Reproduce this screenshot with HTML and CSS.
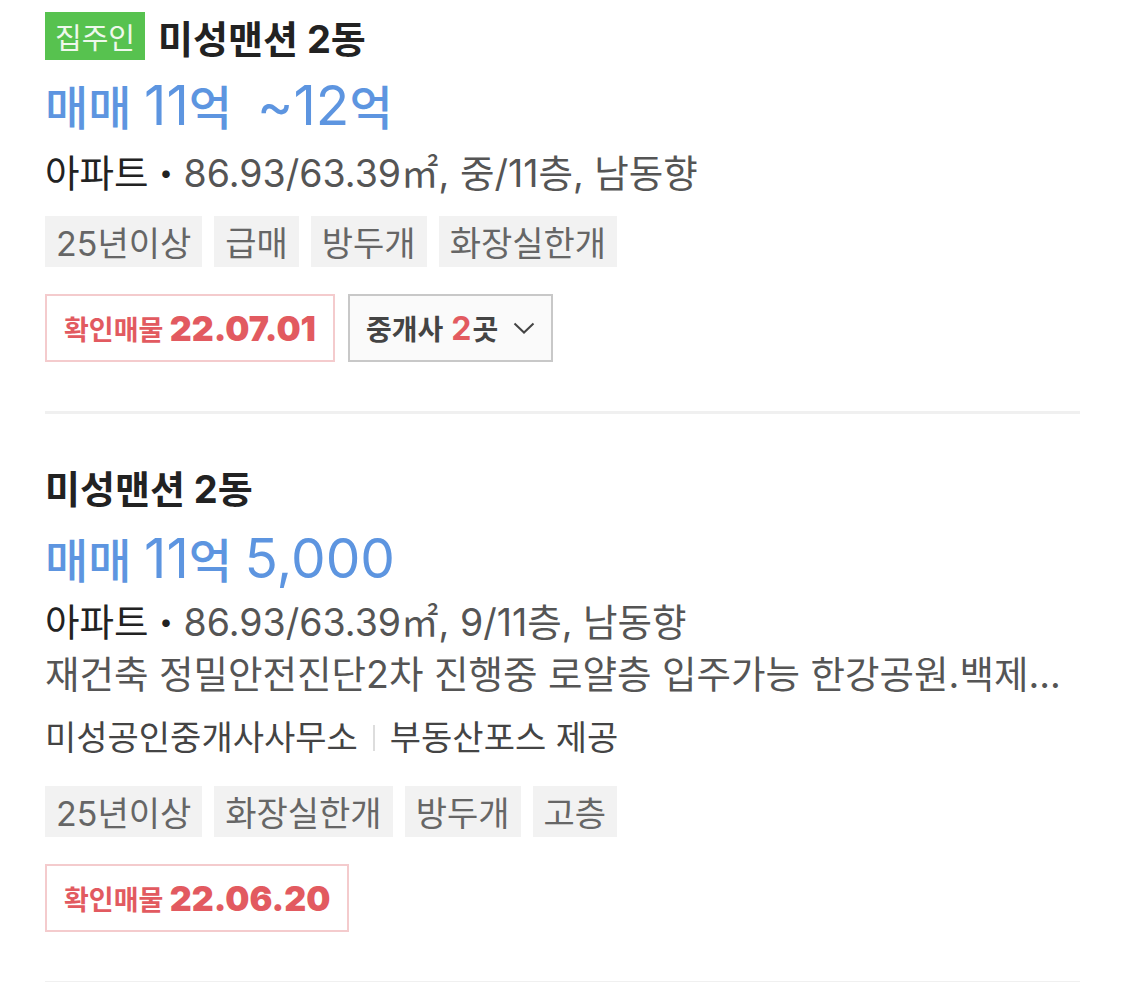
FILE: index.html
```html
<!DOCTYPE html>
<html lang="ko">
<head>
    <meta charset="UTF-8">
    <meta name="viewport" content="width=device-width, initial-scale=1.0">
    <title>매물 목록</title>
    <link rel="stylesheet" href="styles.css">
</head>
<body>
    <main class="list">
        <div class="item">
            <div class="item-title">
                <span class="owner-badge">집주인</span>
                <span class="title-text">미성맨션 2동</span>
            </div>
            <div class="price">매매 <span class="num">11</span>억 &nbsp;<span class="num">~12</span>억</div>
            <p class="spec"><span class="spec-type">아파트 <b>·</b></span> 86.93/63.39㎡, 중/11층, 남동향</p>
            <div class="tags">
                <span class="tag">25년이상</span>
                <span class="tag">급매</span>
                <span class="tag">방두개</span>
                <span class="tag">화장실한개</span>
            </div>
            <div class="actions">
                <span class="confirmed">확인매물 <strong>22.07.01</strong></span>
                <button class="brokers">
                    <span>중개사</span>
                    <em>2</em>
                    <span>곳</span>
                    <svg class="chevron" width="22" height="12" viewBox="0 0 22 12"><path d="M1.5 1.5 L11 10.5 L20.5 1.5" fill="none" stroke="#444" stroke-width="2"/></svg>
                </button>
            </div>
        </div>

        <div class="item">
            <div class="item-title">
                <span class="title-text">미성맨션 2동</span>
            </div>
            <div class="price">매매 <span class="num">11</span>억 <span class="num">5,000</span></div>
            <p class="spec"><span class="spec-type">아파트 <b>·</b></span> 86.93/63.39㎡, 9/11층, 남동향</p>
            <p class="desc">재건축 정밀안전진단2차 진행중 로얄층 입주가능 한강공원.백제...</p>
            <p class="agent">미성공인중개사사무소<span class="sep"></span>부동산포스 제공</p>
            <div class="tags">
                <span class="tag">25년이상</span>
                <span class="tag">화장실한개</span>
                <span class="tag">방두개</span>
                <span class="tag">고층</span>
            </div>
            <div class="actions">
                <span class="confirmed">확인매물 <strong>22.06.20</strong></span>
            </div>
        </div>
    </main>
</body>
</html>
```

FILE: styles.css
```css
body {
    margin: 0;
    background: #fff;
    font-family: Inter, "Noto Sans CJK KR", sans-serif;
    color: #222;
}

.list {
    padding: 0 45px;
}

.item {
    border-bottom: 3px solid #f0f0f0;
    padding: 50px 0 49px;
}

.item:first-child {
    padding-top: 12px;
    padding-bottom: 49px;
}

.item-title {
    display: flex;
    align-items: center;
    gap: 13px;
    height: 48px;
}

.item + .item .item-title {
    height: 44px;
}

.owner-badge {
    display: flex;
    align-items: center;
    height: 48px;
    padding: 0 10px;
    background: #57c24f;
    color: #eef8ec;
    font-size: 29px;
}

.title-text {
    font-size: 38px;
    font-weight: 700;
    color: #222;
}

.price {
    height: 56px;
    margin-top: 17px;
    font-size: 47px;
    line-height: 56px;
    font-weight: 500;
    color: #5d95e0;
}

.price .num {
    font-size: 55px;
    font-weight: 400;
}

.item + .item .price {
    margin-top: 22px;
}

.spec {
    margin: 21px 0 0;
    font-size: 37.5px;
    line-height: 40px;
    color: #555;
}

.item + .item .spec {
    margin-top: 17px;
}

.spec-type {
    color: #222;
}

.spec-type b {
    font-weight: 900;
}

.desc {
    margin: 12px 0 0;
    font-size: 37.5px;
    line-height: 40px;
    color: #555;
    white-space: nowrap;
}

.agent {
    margin: 23px 0 0;
    font-size: 34px;
    line-height: 40px;
    color: #444;
    display: flex;
    align-items: center;
}

.agent .sep {
    width: 2px;
    height: 26px;
    background: #ddd;
    margin: 0 15px;
}

.tags {
    display: flex;
    gap: 12px;
    margin-top: 22px;
}

.item + .item .tags {
    margin-top: 28px;
}

.tag {
    display: flex;
    align-items: center;
    height: 51px;
    padding: 0 11px;
    background: #f2f2f2;
    color: #666;
    font-size: 34px;
}

.actions {
    display: flex;
    gap: 13px;
    margin-top: 27px;
}

.confirmed,
.brokers {
    display: flex;
    align-items: center;
    height: 68px;
    box-sizing: border-box;
    font-family: inherit;
    font-weight: 700;
}

.confirmed {
    padding: 0 17px;
    border: 2px solid #f4cbcd;
    color: #e25a60;
    font-size: 27px;
    white-space: pre;
}

.confirmed strong {
    font-size: 34px;
}

.brokers {
    padding: 0 16px;
    border: 2px solid #c8c8c8;
    background: #fafafa;
    color: #444;
    font-size: 28px;
}

.brokers em {
    font-style: normal;
    color: #e25a60;
    font-size: 32px;
    margin-left: 8px;
    margin-right: 1px;
}

.chevron {
    margin-left: 15px;
}
```
